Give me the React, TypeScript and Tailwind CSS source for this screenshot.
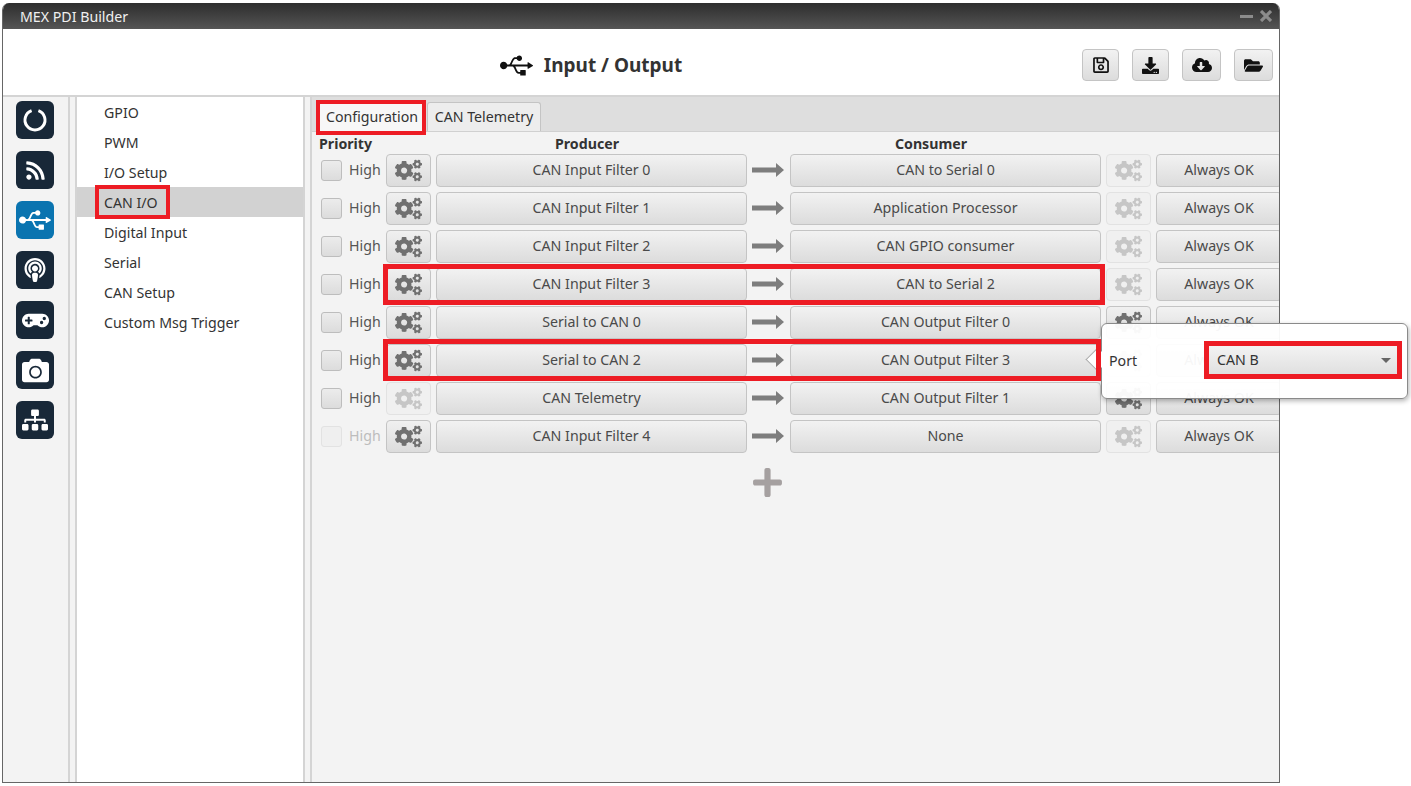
import { FaRegSave, FaDownload, FaCloudDownloadAlt, FaFolderOpen, FaUsb, FaRss, FaGamepad, FaCamera, FaSitemap, FaPodcast, FaCogs, FaPlus } from 'react-icons/fa';

const navItems = ['GPIO', 'PWM', 'I/O Setup', 'CAN I/O', 'Digital Input', 'Serial', 'CAN Setup', 'Custom Msg Trigger'];

const rows = [
  { producer: 'CAN Input Filter 0', consumer: 'CAN to Serial 0' },
  { producer: 'CAN Input Filter 1', consumer: 'Application Processor' },
  { producer: 'CAN Input Filter 2', consumer: 'CAN GPIO consumer' },
  { producer: 'CAN Input Filter 3', consumer: 'CAN to Serial 2' },
  { producer: 'Serial to CAN 0', consumer: 'CAN Output Filter 0', rightGearOn: true },
  { producer: 'Serial to CAN 2', consumer: 'CAN Output Filter 3' },
  { producer: 'CAN Telemetry', consumer: 'CAN Output Filter 1', leftGearOff: true, rightGearOn: true },
  { producer: 'CAN Input Filter 4', consumer: 'None', highOff: true },
];

const btn = 'flex items-center justify-center rounded-[4px] border border-[#c4c4c4] bg-gradient-to-b from-[#f2f2f2] to-[#dcdcdc] text-[#4a4a4a]';

function SideIcon({ children, active }: { children: React.ReactNode; active?: boolean }) {
  return (
    <div className={`flex h-[38px] w-[38px] items-center justify-center rounded-[6px] text-white ${active ? 'bg-[#0a74b0]' : 'bg-[#182838]'}`}>
      {children}
    </div>
  );
}

function GearButton({ off }: { off?: boolean }) {
  return (
    <div className={`flex h-[33px] w-[45px] shrink-0 items-center justify-center rounded-[4px] border ${off ? 'border-[#e2e2e2] bg-[#f0f0f0] text-[#c6c6c6]' : 'border-[#c4c4c4] bg-gradient-to-b from-[#f0f0f0] to-[#dcdcdc] text-[#707070]'}`}>
      <FaCogs size={27} />
    </div>
  );
}

function Arrow() {
  return (
    <svg width="33" height="16" viewBox="0 0 33 16" className="mx-[5px] mb-[1px] shrink-0 text-[#7d7d7d]">
      <path d="M0 5.500h24V1l8 7-8 7v-4.500H0z" fill="currentColor" />
    </svg>
  );
}

function Row({ row }: { row: (typeof rows)[number] }) {
  return (
    <div className="flex h-[33px] items-center">
      <div className={`ml-[9px] h-[21px] w-[21px] shrink-0 rounded-[3px] border ${row.highOff ? 'border-[#e2e2e2] bg-[#efefef]' : 'border-[#bdbdbd] bg-gradient-to-b from-[#ececec] to-[#dcdcdc]'}`} />
      <span className={`ml-[7px] w-[37px] shrink-0 pb-[2px] text-[14.2px] ${row.highOff ? 'text-[#bdbdbd]' : 'text-[#555]'}`}>High</span>
      <GearButton off={row.leftGearOff} />
      <div className={`${btn} ml-[5px] h-[33px] w-[311px] shrink-0 pb-[2px] text-[14.2px]`}>{row.producer}</div>
      <Arrow />
      <div className={`${btn} h-[33px] w-[311px] shrink-0 pb-[2px] text-[14.2px]`}>{row.consumer}</div>
      <div className="ml-[5px]">
        <GearButton off={!row.rightGearOn} />
      </div>
      <div className={`${btn} ml-[5px] h-[33px] w-[126px] shrink-0 pb-[2px] text-[14.2px]`}>Always OK</div>
    </div>
  );
}

function RedBox({ className }: { className: string }) {
  return <div className={`pointer-events-none absolute border-[#ed1c24] ${className}`} />;
}

export default function App() {
  return (
    <div className="relative h-[786px] w-[1411px] overflow-hidden bg-white pl-[2px] pt-[3px] text-[#333]" style={{ fontFamily: '"Noto Sans", "Open Sans", sans-serif' }}>
      <div className="flex h-[780px] w-[1278px] flex-col overflow-hidden rounded-t-[7px] border-x border-b border-[#666]">
        {/* Title bar */}
        <div className="flex h-[26px] shrink-0 items-center justify-between bg-gradient-to-b from-[#2e2e2e] to-[#555] pl-[17px] pr-[7px]">
          <span className="pt-[2px] text-[14.2px] text-[#f0f0f0]">MEX PDI Builder</span>
          <div className="flex items-center gap-[7px]">
            <div className="h-[3px] w-[13px] bg-[#8c8c8c]" />
            <svg width="12" height="12" viewBox="0 0 12 12" stroke="#8c8c8c" strokeWidth="3.200">
              <path d="M1 1l10 10M11 1L1 11" />
            </svg>
          </div>
        </div>

        {/* Header */}
        <div className="relative flex h-[68px] shrink-0 items-center justify-center border-b-[2px] border-[#d4d4d4] bg-white">
          <div className="ml-[-100px] mt-[6px] flex items-center gap-[11px]">
            <FaUsb size={33} className="text-[#111]" />
            <span className="text-[19px] font-bold text-[#333]">Input / Output</span>
          </div>
          <div className="absolute right-[6px] top-[20px] flex">
            <div className={`${btn} h-[32px] w-[37px] text-[#111]`}><FaRegSave size={18} /></div>
            <div className={`${btn} ml-[13px] h-[32px] w-[37px] text-[#111]`}><FaDownload size={17} /></div>
            <div className={`${btn} ml-[13px] h-[32px] w-[39px] text-[#111]`}><FaCloudDownloadAlt size={20} /></div>
            <div className={`${btn} ml-[13px] h-[32px] w-[39px] text-[#111]`}><FaFolderOpen size={19} /></div>
          </div>
        </div>

        {/* Body */}
        <div className="flex min-h-0 flex-1">
          <div className="flex w-[65px] shrink-0 flex-col items-center gap-[12px] bg-[#f3f3f3] pr-[1px] pt-[4px]">
            <SideIcon>
              <svg width="26" height="26" viewBox="0 0 26 26" fill="none" stroke="currentColor" strokeWidth="3">
                <path d="M9.600 3.600a10 10 0 1 0 6.800 0" />
              </svg>
            </SideIcon>
            <SideIcon><FaRss size={21} /></SideIcon>
            <SideIcon active><FaUsb size={32} /></SideIcon>
            <SideIcon><FaPodcast size={24} /></SideIcon>
            <SideIcon><FaGamepad size={27} /></SideIcon>
            <SideIcon><FaCamera size={27} /></SideIcon>
            <SideIcon><FaSitemap size={26} /></SideIcon>
          </div>
          <div className="w-[9px] shrink-0 border-x-[2px] border-[#d4d4d4] bg-[#f3f3f3]" />
          <div className="w-[226px] shrink-0 bg-white">
            {navItems.map((item) => (
              <div key={item} className={`flex h-[30px] items-center pl-[27px] pt-[2px] text-[14.2px] ${item === 'CAN I/O' ? 'bg-[#d2d2d2]' : ''}`}>
                {item}
              </div>
            ))}
          </div>
          <div className="w-[9px] shrink-0 border-x-[2px] border-[#d4d4d4] bg-[#f3f3f3]" />

          {/* Main panel */}
          <div className="min-w-0 flex-1 overflow-hidden bg-[#f3f3f3]">
            <div className="flex h-[35px] items-end border-b border-[#d0d0d0] bg-[#dedede] pl-[8px]">
              <div className="flex h-[29px] w-[104px] items-center justify-center rounded-t-[3px] bg-[#f7f7f7] text-[14.2px]">Configuration</div>
              <div className="ml-[3px] flex h-[29px] w-[114px] items-center justify-center rounded-t-[3px] border border-b-0 border-[#c4c4c4] bg-[#ededed] text-[14.2px]">CAN Telemetry</div>
            </div>
            <div className="flex h-[22px] items-center pl-[7px] pt-[2px] text-[14.2px] font-bold text-[#333]">
              <span className="w-[229px]">Priority</span>
              <span className="w-[78px] text-center">Producer</span>
              <span className="ml-[266px] w-[78px] text-center">Consumer</span>
            </div>
            <div className="flex flex-col gap-[5px]">
              {rows.map((row) => (
                <Row key={row.producer} row={row} />
              ))}
            </div>
            <div className="ml-[439px] mt-[13px] text-[#a5a0a0]">
              <FaPlus size={33} />
            </div>
          </div>
        </div>
      </div>

      {/* Port popover */}
      <div className="absolute left-[1101px] top-[323px] flex h-[76px] w-[307px] items-center rounded-[6px] border border-[#8a8a8a] bg-white/95 pl-[7px] shadow-[1px_2px_5px_rgba(0,0,0,0.3)]">
        <div className="absolute left-[-13px] top-[27px] h-[17px] w-[17px] rotate-45 border-b border-l border-[#aaa] bg-white" />
        <span className="relative text-[14.2px] text-[#333]">Port</span>
        <div className="absolute left-[102px] top-[17px] flex h-[38px] w-[198px] items-center justify-between border-[5px] border-[#ed1c24] bg-gradient-to-b from-[#f3f3f3] to-[#e0e0e0] pl-[8px] pr-[6px] text-[14.2px]">
          CAN B
          <div className="h-0 w-0 border-x-[5px] border-t-[5px] border-x-transparent border-t-[#666]" />
        </div>
      </div>

      {/* Red highlights */}
      <RedBox className="left-[316px] top-[100px] h-[35px] w-[110px] border-[4px]" />
      <RedBox className="left-[95px] top-[185px] h-[34px] w-[75px] border-[4px]" />
      <RedBox className="left-[383px] top-[264px] h-[41px] w-[722px] border-[5px]" />
      <RedBox className="left-[383px] top-[339px] h-[42px] w-[718px] border-[5px]" />
    </div>
  );
}
